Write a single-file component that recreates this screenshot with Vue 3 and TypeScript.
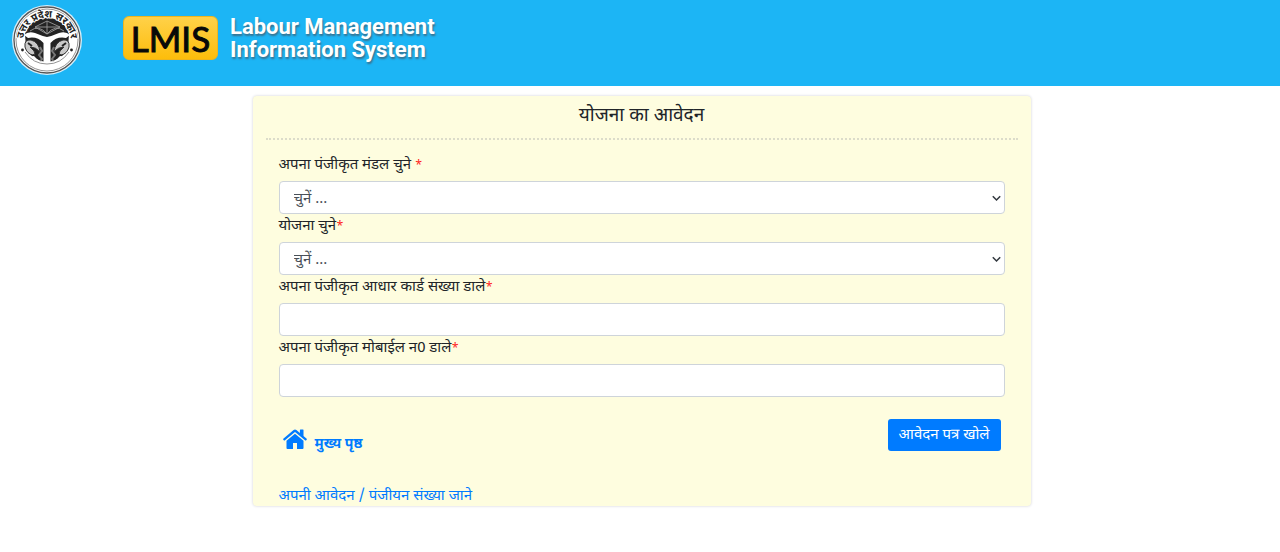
<script setup lang="ts">
import { ref } from 'vue'

const mandal = ref('')
const scheme = ref('')
const aadhaar = ref('')
const mobile = ref('')
</script>

<template>
  <header class="topbar">
    <svg class="seal" viewBox="0 0 72 72" role="img" aria-label="उत्तर प्रदेश सरकार">
      <defs>
        <path id="seal-arc" d="M13.2 45 A24 24 0 1 1 58.8 45" />
      </defs>
      <circle cx="36" cy="36" r="35" fill="#d8eef8" />
      <circle cx="36" cy="36" r="33" fill="#fff" stroke="#555" stroke-width="1.3" />
      <circle cx="36" cy="36" r="31" fill="#fff" stroke="#777" stroke-width=".8" />
      <path d="M14 30 A23 23 0 0 1 58 30 L57 44 A23 23 0 0 1 15 44Z" fill="#232323" />
      <path d="M24 23 L36 17 49 23 36 30Z M36 17 V30 M24 23 H49 M19 27 Q28 20 36 30 Q44 20 53 27" fill="none" stroke="#999" stroke-width=".9" />
      <path d="M13 31 Q17 27 24 29 Q31 32 36 33 Q41 32 48 29 Q55 27 59 31 L55 34 Q46 32 39.5 39 V59 H32.5 V39 Q26 32 17 34Z" fill="#fff" />
      <path d="M14 43 Q13 35 20 36 Q28 38 29 48 Q25 43 19 43 L23 47 Q25 50 22 51 Q16 50 14 43Z M58 43 Q59 35 52 36 Q44 38 43 48 Q47 43 53 43 L49 47 Q47 50 50 51 Q56 50 58 43Z" fill="#c9c9c9" stroke="#333" stroke-width="1" />
      <path d="M17 39 L21 42 M55 39 L51 42" stroke="#222" stroke-width="2" />
      <path d="M29 43 L31 47 28 51 31 55 28 59 M43 43 L41 47 44 51 41 55 44 59" fill="none" stroke="#777" stroke-width="2" />
      <path d="M9 46 Q16 53 23 52 Q29 59 36 59 Q43 59 49 52 Q56 53 63 46 Q58 65 36 65 Q14 65 9 46Z" fill="#fff" />
      <path d="M14 48 Q22 60 36 60 Q50 60 58 48" fill="none" stroke="#777" stroke-width=".8" />
      <circle cx="11.5" cy="46" r="1.4" fill="#222" />
      <circle cx="60.5" cy="46" r="1.4" fill="#222" />
      <text class="seal-text"><textPath href="#seal-arc" startOffset="50%" text-anchor="middle">उत्तर प्रदेश सरकार</textPath></text>
    </svg>
    <div class="brand">
      <span class="badge">LMIS</span>
      <div class="brand-name">
        <div>Labour Management</div>
        <div>Information System</div>
      </div>
    </div>
  </header>

  <main class="page">
    <form class="card" @submit.prevent>
      <h1 class="title">योजना का आवेदन</h1>
      <div class="fields">
        <label for="mandal">अपना पंजीकृत मंडल चुने <span class="req">*</span></label>
        <div class="select-wrap">
          <select id="mandal" v-model="mandal" class="control">
            <option value="">चुनें ...</option>
          </select>
          <svg class="chevron" viewBox="0 0 8 6" aria-hidden="true"><path d="M.7 1 L4 4.3 7.3 1" /></svg>
        </div>
        <label for="scheme">योजना चुने<span class="req">*</span></label>
        <div class="select-wrap">
          <select id="scheme" v-model="scheme" class="control">
            <option value="">चुनें ...</option>
          </select>
          <svg class="chevron" viewBox="0 0 8 6" aria-hidden="true"><path d="M.7 1 L4 4.3 7.3 1" /></svg>
        </div>
        <label for="aadhaar">अपना पंजीकृत आधार कार्ड संख्या डाले<span class="req">*</span></label>
        <input id="aadhaar" v-model="aadhaar" class="control" type="text">
        <label for="mobile">अपना पंजीकृत मोबाईल न0 डाले<span class="req">*</span></label>
        <input id="mobile" v-model="mobile" class="control" type="text">
        <div class="actions">
          <a class="home" href="#">
            <svg viewBox="0 0 24 20" aria-hidden="true">
              <path d="M12 4.7 3.5 11.7V19q0 .9.9.9H10V14h4v5.9h5.6q.9 0 .9-.9v-7.3Z" />
              <path d="M23.7 9.7 20.5 7V1q0-.5-.5-.5h-2.6q-.5 0-.5.5v3L13.4 1q-1.4-1-2.8 0L.3 9.7q-.4.3-.1.7l.8 1q.3.4.7 0L12 2.9l10.3 8.5q.4.4.7 0l.8-1q.3-.4-.1-.7Z" />
            </svg>
            <span class="home-text">मुख्य पृष्ठ</span>
          </a>
          <button type="submit" class="submit">आवेदन पत्र खोले</button>
        </div>
        <a class="lookup" href="#">अपनी आवेदन / पंजीयन संख्या जाने</a>
      </div>
    </form>
  </main>
</template>

<style>
body {
  margin: 0;
  background: #fff;
}
</style>

<style scoped>
* {
  box-sizing: border-box;
}
.topbar {
  display: flex;
  align-items: flex-start;
  gap: 40px;
  height: 86px;
  padding: 4px 11px;
  background: #1cb5f5;
}
.seal {
  flex: none;
  width: 72px;
  height: 72px;
}
.seal-text {
  font: bold 10px "Noto Sans Devanagari", "Noto Sans", sans-serif;
  fill: #222;
  stroke: #fff;
  stroke-width: 2px;
  paint-order: stroke;
}
.brand {
  display: flex;
  align-items: center;
  gap: 12px;
  padding-top: 11px;
}
.badge {
  display: flex;
  align-items: center;
  justify-content: center;
  width: 95px;
  height: 44px;
  border: 1px solid #eeb51d;
  border-radius: 6px;
  background: linear-gradient(#ffd149, #fdbd0b);
  color: #080808;
  font: 400 35px/40px Lato, sans-serif;
  -webkit-text-stroke: 1px #080808;
}
.brand-name {
  color: #fff;
  font: bold 22px/23px "Roboto", sans-serif;
  text-shadow: 1px 2px 2px #39708c;
  white-space: nowrap;
}
.page {
  display: flex;
  justify-content: center;
  padding: 10px 0 10px 3px;
  color: #212529;
  font: 15px/24px "Noto Sans Devanagari", "Noto Sans", sans-serif;
}
.card {
  width: 61%;
  max-width: 778px;
  padding: 0 13px;
  border-radius: 4px;
  background: #fefddf;
  box-shadow: 0 0 3px #cfcfd6;
}
.title {
  margin: 0;
  padding: 6px 0 6px;
  border-bottom: 2px dotted #dcdcca;
  font-size: 19px;
  line-height: 30px;
  font-weight: 400;
  text-align: center;
}
.fields {
  display: flex;
  flex-direction: column;
  padding: 13px 13px 0;
}
label {
  height: 28px;
  line-height: 26px;
}
.req {
  color: #f22;
  font-size: 12px;
}
.control {
  display: block;
  width: 100%;
  height: 33px;
  padding: 4px 14px 0;
  border: 1px solid #ced4da;
  border-radius: 4px;
  background: #fff;
  color: #495057;
  font: inherit;
  appearance: none;
}
.select-wrap {
  position: relative;
}
.chevron {
  position: absolute;
  right: 4px;
  top: 14px;
  width: 9px;
  height: 7px;
  fill: none;
  stroke: #343a40;
  stroke-width: 1.4;
  pointer-events: none;
}
.actions {
  display: flex;
  justify-content: space-between;
  align-items: flex-start;
  padding: 22px 4px 0;
}
a {
  color: #007bff;
  text-decoration: none;
}
.home {
  display: flex;
  align-items: flex-start;
  gap: 8px;
  padding-top: 10px;
  font-size: 14px;
  font-weight: 700;
}
.home-text {
  padding-top: 4px;
}
.home svg {
  width: 24px;
  height: 20px;
  fill: currentColor;
}
.submit {
  height: 32px;
  padding: 2px 11px 0;
  border: 0;
  border-radius: 3px;
  background: #007bff;
  color: #fff;
  font: inherit;
}
.lookup {
  align-self: flex-start;
  margin-top: 31px;
  line-height: 18px;
}
</style>
